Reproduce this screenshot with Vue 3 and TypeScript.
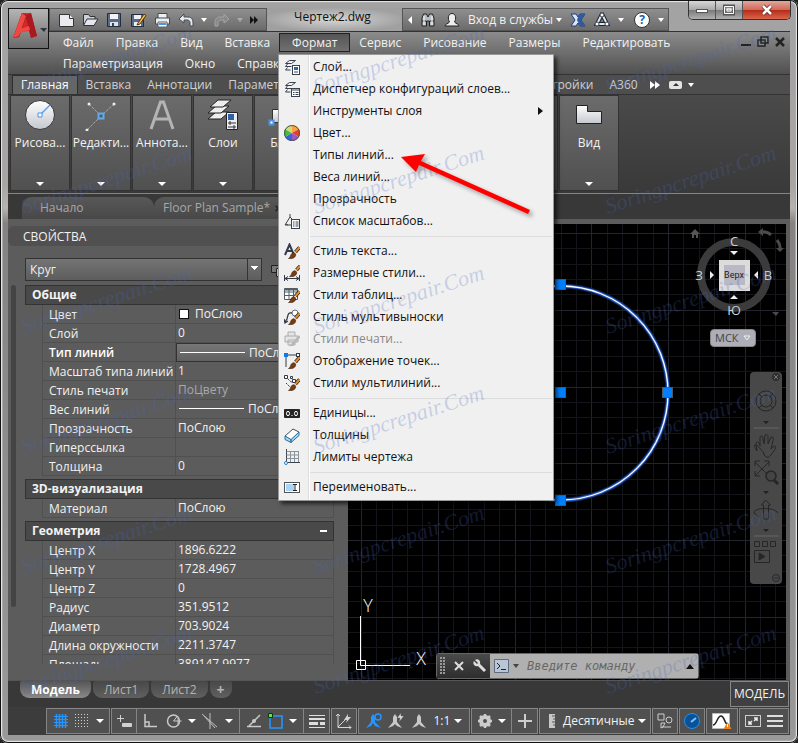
<script setup lang="ts">
import { ref } from 'vue'

interface MenuEntry {
  label: string
  icon?: string
  disabled?: boolean
  submenu?: boolean
}
interface PropertyRow {
  name: string
  value: string
  kind?: 'swatch' | 'line' | 'field' | 'muted'
}
interface PropertyGroup {
  title: string
  rows: PropertyRow[]
}

const brush =
  '<path d="M15.500 4.500l-4 4.500" stroke="#222" stroke-width="3.400"/><path d="M15.500 4.500l-4 4.500" stroke="#f08a1e" stroke-width="2"/><path d="M4.500 15.500c2.500-1 1.500-4 4-5.500 1.500-1 3.500.5 3.200 2.200C11.200 15 8 16 4.500 15.500z" fill="#7a3d12" stroke="#3c1c06" stroke-width=".6"/>'
const layers =
  '<path d="M5.500 1.500h6l-4 3h-6zM1.500 7.500h6M3.500 5l-2 2.500M1.500 11h5M3.500 8.500l-2 2.500" fill="none" stroke="#39424e"/>'

const glyphs: Record<string, string> = {
  layer: layers + '<rect x="8.500" y="6.500" width="7" height="9" fill="#fff" stroke="#39424e"/><rect x="10" y="8" width="4" height="3" fill="#2f62a8"/><path d="M10 13h4" stroke="#39424e"/>',
  states: layers + '<rect x="7.500" y="7.500" width="8" height="8" fill="#fff" stroke="#39424e"/><path d="M7.500 9h8M9 11.500h1.500M11.500 11.500h3M9 13.500h1.500M11.500 13.500h3" stroke="#39424e"/>',
  color:
    '<path d="M8 8V0a8 8 0 0 1 7 4z" fill="#f3a43a"/><path d="M8 8l7-4a8 8 0 0 1 0 8z" fill="#ee3b2c"/><path d="M8 8l7 4a8 8 0 0 1-7 4z" fill="#9a58c4"/><path d="M8 8v8a8 8 0 0 1-7-4z" fill="#3a62d8"/><path d="M8 8l-7 4a8 8 0 0 1 0-8z" fill="#49b83c"/><path d="M8 8L1 4a8 8 0 0 1 7-4z" fill="#d6d878"/><circle cx="8" cy="8" r="7.500" fill="none" stroke="#555"/>',
  scales: '<path d="M6 1v3L1 12h6M6 4l3 3M4 12l-2-1" fill="none" stroke="#39424e"/><rect x="7.500" y="6.500" width="8" height="9" fill="#fff" stroke="#39424e"/><path d="M9 9h1.500M11.500 9h3M9 11h1.500M11.500 11h3M9 13h1.500M11.500 13h3" stroke="#39424e"/>',
  text: '<path d="M1 12L5.500 1.500 10 12M2.500 8h6" fill="none" stroke="#333c48" stroke-width="2"/>' + brush,
  dim: '<path d="M.5 10v6M15.500 10v6M1 13.500h14M4 11.500l-3 2 3 2M12 11.500l3 2-3 2" fill="none" stroke="#333c48"/><g transform="translate(1 -4)">' + brush + '</g>',
  table: '<path d="M.5 1.500h13v11H.5zM.5 5h13M.5 8.500h13M5 3v9.500M9.500 3v9.500" fill="#fff" stroke="#555e68"/><path d="M.5 2.500h13" stroke="#555e68" stroke-width="2"/>' + brush,
  leader: '<circle cx="11" cy="4" r="3" fill="#fff" stroke="#666e78"/><path d="M8 4C4 3 4 6 3 10l-2 3M0 10l1 4 3-2" fill="none" stroke="#333c48" stroke-width="1.300"/>' + brush,
  print: '<g opacity=".55"><path d="M4 5V1h7v4M1 5h13v6H1zM4 9h7v5H4z" fill="#ddd" stroke="#777"/><path d="M15.500 5l-4 5" stroke="#888" stroke-width="2.500"/><path d="M5 15c3-1 3-5 6-5 1 3-2 6-6 5z" fill="#888"/></g>',
  point: '<path d="M2 2h12M2 2v12" stroke="#333c48"/><rect width="4" height="4" fill="#0a7cf0"/><rect x="12.500" y=".5" width="3" height="3" fill="#fff" stroke="#333c48"/>' + brush,
  mline: '<path d="M2 2l5 5 6-1M2 8l4 4" fill="none" stroke="#333c48" stroke-dasharray="2 1"/><g fill="#fff" stroke="#333c48"><path d="M.5.5h3v3h-3zM6.500 1.500h2v2h-2zM8.500 7.500h3v-3h-3z"/></g>' + brush,
  units: '<rect y="4" width="16" height="9" rx="1" fill="#252525"/><ellipse cx="4" cy="8.500" rx="1.500" ry="2.200" fill="none" stroke="#fff"/><ellipse cx="12" cy="8.500" rx="1.500" ry="2.200" fill="none" stroke="#fff"/><path d="M7.500 10.500h1" stroke="#fff"/>',
  thickness: '<path d="M1 9l8-7 6 3-8 8z" fill="#fff" stroke="#44505c"/><path d="M1 9v3.500l6 3V12.500zM7 12.500v3l8-7V5z" fill="#a6d8f4" stroke="#2f6f98"/>',
  limits: '<path d="M2.500 0v14M2 13.500h14" stroke="#39424e"/><path d="M2.500 2.500h12M2.500 6h12M2.500 9.500h12M6.500 2v11M10.500 2v11M14.500 2v11" stroke="#8a929a"/><circle cx="2" cy="14" r="1.500" fill="#fff" stroke="#1a82d8"/>',
  rename: '<rect x=".5" y="3.500" width="15" height="10" fill="#fff" stroke="#555"/><path d="M2 5h8v7H2z" fill="#a9d3f7"/><path d="M9 5.500h4M11 5.500v6M9 11.500h4" stroke="#222"/>',
  newDoc: '<path d="M1.500 2.500h10l4 4v8h-14z" fill="#e9ebf0" stroke="#333"/><path d="M11.500 2.500v4h4" fill="#fff" stroke="#333"/>',
  open: '<path d="M1.500 13V2.500h5l1.500 2h5V7" fill="#cdd0d8" stroke="#333"/><path d="M1.500 13.500L5 7h11l-4 6.500z" fill="#e4e7ee" stroke="#333"/>',
  save: '<path d="M1.500 1.500h13v13h-13z" fill="#5a6a84" stroke="#222d3d"/><path d="M4 2h8v5H4z" fill="#f0f2f5"/><path d="M4 10h8v4H4z" fill="#dde1e8"/><path d="M6 11h2v3H6z" fill="#35435b"/>',
  saveAs: '<path d="M1.500 2.500h12v12h-12z" fill="#5a6a84" stroke="#222d3d"/><path d="M4 3h7v4H4zM4 10h7v4H4z" fill="#eceff4"/><path d="M8 11l6-9 2 1.500-6 8.500-3 1z" fill="#f2c04a" stroke="#5a3208"/>',
  plot: '<path d="M4 6V1.500h9V6M1.500 6h14v6h-14z" fill="#eceef2" stroke="#444b55"/><path d="M4 10h9v5H4z" fill="#fff" stroke="#59626e"/><path d="M5 12h7" stroke="#4c97db" stroke-width="2"/>',
  undo: '<path d="M1 7l5-5v3h4c4 0 5 3 5 6v3h-3v-3c0-2-1-3-3-3H6v3z" fill="#e6e9ee" stroke="#444b55"/>',
  redo: '<path d="M15 7l-5-5v3H6c-4 0-5 3-5 6v3h3v-3c0-2 1-3 3-3h3v3z" fill="#888" stroke="#a4a4a4"/>',
  find: '<path d="M2 6l1.500-4h3L8 5l1.500-3h3L14 6v8H9.500V9h-3v5H2z" fill="#b8bdc4" stroke="#222"/><path d="M2 9h4M10 9h4" stroke="#222"/><path d="M4 4v9M12 4v9" stroke="#fff"/>',
  user: '<path d="M1 14c0-2 3-2 4.500-4-2-3-1.500-8.500 2.500-8.500S12.500 7 10.500 10c1.500 2 4.500 2 4.500 4z" fill="#eee" stroke="#222"/>',
  exchange: '<path d="M1 2h5l2 3 2-3h5l-4 6 4 6h-5l-2-3-2 3H1l4-6z" fill="#dbe6f6" stroke="#1d3d7a"/><path d="M9 2h6l-4 6 4 6h-5l-3-6z" fill="#2e5ba0"/>',
  share: '<path d="M8 2l5 10H3z" fill="none" stroke="#222" stroke-width="4"/><path d="M8 2l5 10H3z" fill="none" stroke="#dde6f2" stroke-width="2"/><g fill="#fff" stroke="#2b405e"><circle cx="8" cy="3" r="2"/><circle cx="3" cy="12" r="2"/><circle cx="13" cy="12" r="2"/></g>',
  grid: '<path d="M3.500 1v14M6.500 1v14M9.500 1v14M12.500 1v14" stroke="#2496ff" stroke-width="1.500"/><path d="M1 3.500h14M1 6.500h14M1 9.500h14M1 12.500h14" stroke="#2496ff"/>',
  snap: '<path d="M1 1.500h15M1 4.500h15M1 7.500h15M1 10.500h15M1 13.500h15" stroke="#d0d0d0" stroke-dasharray="1 2"/>',
  infer: '<path d="M1 5.500h7M4.500 2v7" stroke="#d0d0d0"/><rect x="6" y="10" width="10" height="4" rx="1" fill="#d0d0d0"/>',
  ortho: '<path d="M2 1v12.500h12M2 9h4v4" fill="none" stroke="#c8c8c8" stroke-width="1.500"/>',
  polar: '<circle cx="7.500" cy="8" r="6" fill="none" stroke="#c8c8c8" stroke-width="1.500"/><path d="M7.500 8h8M7.500 8l4-5M12 5v6" fill="none" stroke="#c8c8c8"/>',
  iso: '<path d="M0 1l15 13M8 0v16M2 3l11 12" fill="none" stroke="#c0c0c0"/>',
  track: '<path d="M1 13.500h14M3 13L14 2" stroke="#c8c8c8" stroke-width="1.500"/><circle cx="8" cy="8" r="2" fill="#c8c8c8"/>',
  osnap: '<path d="M2 3h12v12H2z" fill="none" stroke="#2496ff" stroke-width="1.600"/><path d="M.5.5h4v4h-4z" fill="#61e34d" stroke="#083808"/>',
  weight: '<path d="M0 2.500h16M0 14.500h16" stroke="#ddd"/><path d="M0 6h16" stroke="#ddd" stroke-width="2"/><path d="M0 10.500h9M11 10.500h5" stroke="#ddd" stroke-width="3"/>',
  ucs: '<path d="M2 1v13.500h13M2 14l8-8M0 3l2-2 2 2M13 12.500l2 2-2 2" fill="none" stroke="#d4d4d4"/><path d="M12 1L8 7h3l-1 3 5-6h-3z" fill="#d4d4d4"/>',
  annoOn: '<path d="M7 1l2 3v5l6 6-6-2-2-3-2 3-5 2 5-6V4z" fill="#2496ff"/><circle cx="12" cy="4" r="3" fill="#45515f" stroke="#2496ff" stroke-width="1.500"/>',
  annoFlash: '<path d="M7 1l2 3v5l5 6-5-2-2-2-2 2-5 2 5-6V4z" fill="#c8c8c8"/><path d="M13 0L9 5h3l-1 4 5-6h-3z" fill="#ddd" stroke="#555" stroke-width=".5"/>',
  anno: '<path d="M8 1l2 3v5l5 6-5-2-2-2-2 2-5 2 5-6V4z" fill="#c8c8c8"/>',
  gear: '<circle cx="8" cy="8" r="4" fill="none" stroke="#ccc" stroke-width="4"/><path d="M8 1v3M8 12v3M1 8h3M12 8h3M3 3l2 2M11 11l2 2M3 13l2-2M11 5l2-2" stroke="#ccc" stroke-width="2.500"/>',
  plus: '<path d="M8 1v14M1 8h14" stroke="#ccc" stroke-width="2"/>',
  ruler: '<path d="M5 1h6v14H5z" fill="#c8c8c8"/><path d="M11 3H8M11 6H9M11 9H8M11 12H9" stroke="#555"/>',
  shapes: '<path d="M1 1h6v6H1zM4 15v-5h4l-2 4z" fill="none" stroke="#ccc"/><circle cx="12" cy="7" r="3" fill="none" stroke="#ccc"/><path d="M5 14h9" stroke="#ccc"/>',
  hardware: '<circle cx="8" cy="8" r="7.500" fill="#0a5298" stroke="#248ff0"/><path d="M7 9l5-4" stroke="#7cc4ff" stroke-width="2"/>',
  graph: '<path d="M.5.5h17v15H.5z" fill="#fff" stroke="#bbb"/><path d="M1 12c4 0 4-9 8-9s3 9 8 9" fill="none" stroke="#222" stroke-width="1.500"/><path d="M15.500 9l4 7h-8z" fill="#e98320"/><path d="M15.500 11v3" stroke="#fff"/>',
  full: '<rect x=".5" y="2.500" width="15" height="11" fill="none" stroke="#ccc"/><path d="M4 11l3-3M4 8v3h3M12 5L9 8M9 5h3v3" fill="none" stroke="#eee" stroke-width="1.500"/>',
  burger: '<path d="M0 3h16M0 8h16M0 13h16" stroke="#ddd" stroke-width="2"/>',
}

const bigIcons: Record<string, string> = {
  draw: '<circle cx="16" cy="16" r="14.500" fill="url(#silver)" stroke="#333"/><path d="M16 16L26 6" stroke="#5aa0ec" stroke-width="1.500"/><path d="M14 14h4v4h-4z" fill="#fff" stroke="#4a94e8"/>',
  modify: '<path d="M4 5l12 12L29 5M16 17L2 31" stroke="#a8a8a8" stroke-dasharray="3 1" fill="none"/><g fill="#eee"><circle cx="4" cy="5" r="1.500"/><circle cx="29" cy="5" r="1.500"/><circle cx="2" cy="31" r="1.500"/></g><path d="M13.500 14.500h5v5h-5z" fill="#466" stroke="#65a8f2" stroke-width="2"/>',
  annotate: '<path d="M5 30L14.500 3h3L27 30M9 20h14" fill="none" stroke="#b4b4b4" stroke-width="3"/>',
  layers: '<g fill="#eee" stroke="#222"><path d="M9 13h13l-8 7H1z"/><path d="M9 7h13l-8 7H1z"/><path d="M11 1h13l-8 7H3z"/></g><path d="M19.500 13.500h11v17h-11z" fill="#eceef2" stroke="#222"/><path d="M21 15h6v6h-6z" fill="#2f62a8"/><path d="M21 24h8M21 28h8M23 22v4M27 26v4" stroke="#333"/>',
  block: '<path d="M4.500 10.500h22v13h-22z" fill="url(#silver)" stroke="#333"/><path d="M1.500 21.500h4v4h-4z" fill="#fff" stroke="#4a94e8" stroke-width="2"/>',
  view: '<path d="M3.500 6.500h11v6h14v12h-25z" fill="url(#silver)" stroke="#222"/>',
}

const quickTools = ['newDoc', 'open', 'save', 'saveAs', 'plot']
const mainMenu = ['Файл', 'Правка', 'Вид', 'Вставка', 'Формат', 'Сервис', 'Рисование', 'Размеры', 'Редактировать', 'Параметризация', 'Окно', 'Справка']
const openMenu = ref('Формат')
const ribbonTabs = ['Главная', 'Вставка', 'Аннотации', 'Параметризация', 'Вид', 'Управление', 'Вывод', 'Надстройки', 'A360']
const activeTab = ref('Главная')

const ribbonPanels = [
  { label: 'Рисова...', icon: 'draw' },
  { label: 'Редакти...', icon: 'modify' },
  { label: 'Аннота...', icon: 'annotate' },
  { label: 'Слои', icon: 'layers' },
  { label: 'Блок', icon: 'block' },
  { label: 'Свойства', icon: 'view' },
  { label: 'Группы', icon: 'view' },
  { label: 'Утилиты', icon: 'view' },
  { label: 'Буфер...', icon: 'view' },
  { label: 'Вид', icon: 'view' },
]

const formatMenu: MenuEntry[][] = [
  [
    { label: 'Слой...', icon: 'layer' },
    { label: 'Диспетчер конфигураций слоев...', icon: 'states' },
    { label: 'Инструменты слоя', submenu: true },
    { label: 'Цвет...', icon: 'color' },
    { label: 'Типы линий...' },
    { label: 'Веса линий...' },
    { label: 'Прозрачность' },
    { label: 'Список масштабов...', icon: 'scales' },
  ],
  [
    { label: 'Стиль текста...', icon: 'text' },
    { label: 'Размерные стили...', icon: 'dim' },
    { label: 'Стили таблиц...', icon: 'table' },
    { label: 'Стиль мультивыноски', icon: 'leader' },
    { label: 'Стили печати...', icon: 'print', disabled: true },
    { label: 'Отображение точек...', icon: 'point' },
    { label: 'Стили мультилиний...', icon: 'mline' },
  ],
  [
    { label: 'Единицы...', icon: 'units' },
    { label: 'Толщины', icon: 'thickness' },
    { label: 'Лимиты чертежа', icon: 'limits' },
  ],
  [{ label: 'Переименовать...', icon: 'rename' }],
]

const propertyGroups: PropertyGroup[] = [
  {
    title: 'Общие',
    rows: [
      { name: 'Цвет', value: 'ПоСлою', kind: 'swatch' },
      { name: 'Слой', value: '0' },
      { name: 'Тип линий', value: 'ПоСлою', kind: 'field' },
      { name: 'Масштаб типа линий', value: '1' },
      { name: 'Стиль печати', value: 'ПоЦвету', kind: 'muted' },
      { name: 'Вес линий', value: 'ПоСлою', kind: 'line' },
      { name: 'Прозрачность', value: 'ПоСлою' },
      { name: 'Гиперссылка', value: '' },
      { name: 'Толщина', value: '0' },
    ],
  },
  { title: '3D-визуализация', rows: [{ name: 'Материал', value: 'ПоСлою' }] },
  {
    title: 'Геометрия',
    rows: [
      { name: 'Центр X', value: '1896.6222' },
      { name: 'Центр Y', value: '1728.4967' },
      { name: 'Центр Z', value: '0' },
      { name: 'Радиус', value: '351.9512' },
      { name: 'Диаметр', value: '703.9024' },
      { name: 'Длина окружности', value: '2211.3747' },
      { name: 'Площадь', value: '389147.9977' },
    ],
  },
]

// Grid lines: every fifth one is a major line.
const gridStep = 15.35
const gridLines = Array.from({ length: 140 }, (_, i) => ({ offset: Math.round(i * gridStep), major: i % 5 === 0 }))
const grips = [[213, 61], [213, 169], [320, 169], [213, 277], [105, 169]]

const marks = Array.from({ length: 18 }, (_, i) => ({ x: 24 + (i % 3) * 292, y: 94 + Math.floor(i / 3) * 120 }))
</script>

<template>
  <div class="window">
    <div class="window-buttons">
      <button aria-label="Свернуть"><svg width="12" height="12"><rect x=".5" y="5.500" width="11" height="3" fill="#fff" stroke="#555" /></svg></button>
      <button aria-label="Развернуть"><svg width="12" height="12"><path d="M1 2h10v8H1z" fill="none" stroke="#555" stroke-width="3" /><path d="M1.500 2.500h9v7h-9zM4 5h4v2H4z" fill="none" stroke="#fff" /></svg></button>
      <button class="close" aria-label="Закрыть"><svg width="12" height="12"><path d="M2 2l8 8M10 2l-8 8" stroke="#622" stroke-width="4" /><path d="M2 2l8 8M10 2l-8 8" stroke="#fff" stroke-width="2.500" /></svg></button>
    </div>

    <header class="top">
      <button class="app-button" aria-label="Меню приложения">
        <svg width="38" height="38" viewBox="0 0 38 38">
          <path d="M4 28L13 3h9l6 23-6 2-2-7-8 1-2 5z" fill="#d8262a" />
          <path d="M13 3l5 2 4-2 6 23-6 2-5-20-7 19-6 1z" fill="#a81a1f" />
          <path d="M13 3l4 3-7 20-6 2zM11 19l9-3 1 4-10 3z" fill="#ec4a42" />
          <path d="M31 18h7l-3 4z" fill="#2e3540" />
        </svg>
      </button>
      <div class="title-row">
        <div class="quick-bar">
          <button v-for="tool in quickTools" :key="tool" :aria-label="tool"><svg width="17" height="16" v-html="glyphs[tool]"></svg></button>
          <button aria-label="Отменить"><svg width="16" height="16" v-html="glyphs.undo"></svg></button>
          <i class="caret"></i>
          <button aria-label="Повторить"><svg width="16" height="16" v-html="glyphs.redo"></svg></button>
          <i class="caret dim"></i>
          <button aria-label="Ещё"><svg width="8" height="8"><path d="M0 0l4 4-4 4zM4 0l4 4-4 4z" fill="#111" /></svg></button>
        </div>
        <h1>Чертеж2.dwg</h1>
        <div class="info-bar">
          <svg width="4" height="8"><path d="M4 0v8L0 4z" fill="#fff" /></svg>
          <svg width="16" height="16" v-html="glyphs.find"></svg>
          <svg width="16" height="16" v-html="glyphs.user"></svg>
          <button class="signin">Вход в службы<i class="caret"></i></button>
          <svg width="16" height="16" v-html="glyphs.exchange"></svg>
          <svg width="16" height="16" v-html="glyphs.share"></svg>
          <i class="caret"></i>
          <button class="help" aria-label="Справка">?</button>
          <i class="caret"></i>
        </div>
      </div>
      <div class="menu-row">
        <nav>
          <div v-for="item in mainMenu" :key="item" class="menu-slot">
            <button class="menu-button" :class="{ open: item === openMenu }" @click="openMenu = item">{{ item }}</button>
            <div v-if="item === 'Формат' && openMenu === 'Формат'" class="popup" role="menu">
              <div v-for="(section, s) in formatMenu" :key="s" class="section">
                <button v-for="entry in section" :key="entry.label" class="entry" role="menuitem" :disabled="entry.disabled">
                  <span class="entry-icon"><svg v-if="entry.icon" width="16" height="16" fill="none" v-html="glyphs[entry.icon]"></svg></span>
                  <span class="entry-label">{{ entry.label }}</span>
                  <svg v-if="entry.submenu" width="5" height="8"><path d="M0 0l5 4-5 4z" fill="#111" /></svg>
                </button>
              </div>
            </div>
          </div>
        </nav>
        <div class="mdi">
          <button aria-label="Свернуть чертёж"><svg width="12" height="12"><path d="M1 9h10" stroke="#222" stroke-width="2" /></svg></button>
          <button aria-label="Восстановить чертёж"><svg width="12" height="12"><path d="M4 1h7v6H4zM1 4h7v6H1z" fill="#888" stroke="#222" stroke-width="1.500" /></svg></button>
          <button aria-label="Закрыть чертёж"><svg width="12" height="12"><path d="M2 2l8 8M10 2l-8 8" stroke="#222" stroke-width="2.500" /></svg></button>
        </div>
      </div>
    </header>

    <div class="ribbon-tabs">
      <button v-for="tab in ribbonTabs" :key="tab" :class="{ active: tab === activeTab }" @click="activeTab = tab">{{ tab }}</button>
      <svg width="42" height="10"><path d="M4 1l5 4-5 4zM9 1l5 4-5 4z" fill="#fff" /><rect x="23" y="1" width="13" height="8" rx="2" fill="#e4e4e4" /><path d="M27 6l3-3 3 3z" fill="#333" /></svg>
      <i class="caret"></i>
    </div>

    <div class="ribbon">
      <button v-for="panel in ribbonPanels" :key="panel.label" class="panel">
        <svg width="32" height="32" v-html="bigIcons[panel.icon]"></svg>
        <span>{{ panel.label }}</span>
        <i class="caret big"></i>
      </button>
      <svg class="defs" width="0" height="0"><defs><linearGradient id="silver" x1="0" y1="0" x2="0" y2="1"><stop offset="0" stop-color="#fff" /><stop offset="1" stop-color="#c4c7ce" /></linearGradient></defs></svg>
    </div>

    <div class="file-tabs">
      <button class="start">Начало</button>
      <button class="doc">Floor Plan Sample*<b>✕</b></button>
    </div>

    <main>
      <aside>
        <h2>СВОЙСТВА</h2>
        <div class="picker">
          <select aria-label="Тип объекта"><option>Круг</option></select>
          <svg width="24" height="18"><path d="M1.500 4.500h10v7h-10z" fill="#777" stroke="#222" /><path d="M6.500 7.500h8v8h-8z" fill="#a9c4ee" stroke="#222" /></svg>
        </div>
        <div class="properties">
          <div class="scroll"><i></i></div>
          <div class="groups">
            <section v-for="group in propertyGroups" :key="group.title">
              <h3>{{ group.title }}<i></i></h3>
              <table>
                <tbody>
                  <tr v-for="row in group.rows" :key="row.name">
                    <th scope="row" :class="{ chosen: row.kind === 'field' }">{{ row.name }}</th>
                    <td :class="row.kind"><i v-if="row.kind && row.kind !== 'muted'"></i>{{ row.value }}</td>
                  </tr>
                </tbody>
              </table>
            </section>
          </div>
        </div>
      </aside>

      <div class="canvas">
        <svg class="drawing" width="100%" height="100%">
          <g transform="translate(13 9)" shape-rendering="crispEdges">
            <path v-for="line in gridLines" :key="'v' + line.offset" :d="`M${line.offset} -20V2000`" :stroke="line.major ? '#22242e' : '#14151b'" />
            <path v-for="line in gridLines" :key="'h' + line.offset" :d="`M-20 ${line.offset}H2000`" :stroke="line.major ? '#22242e' : '#14151b'" />
          </g>
          <circle cx="213" cy="169" r="107" fill="none" stroke="#0a235c" stroke-width="5" />
          <circle cx="213" cy="169" r="107" fill="none" stroke="#2a5cc0" stroke-width="3" />
          <circle cx="213" cy="169" r="107" fill="none" stroke="#fff" stroke-width="1.300" />
          <rect v-for="(grip, g) in grips" :key="g" :x="grip[0] - 5.5" :y="grip[1] - 5.5" width="10" height="10" fill="#0080ff" stroke="#4b5a6a" />
          <path d="M12.500 392v49.500H62M8.500 436.500h9v9h-9z" fill="none" stroke="#fff" />
          <text x="20" y="388" class="axis" text-anchor="middle">Y</text>
          <text x="73" y="441" class="axis" text-anchor="middle">X</text>
        </svg>

        <svg class="cube" width="96" height="128">
          <circle cx="42" cy="51" r="33" fill="none" stroke="#3b3b3b" stroke-width="8" />
          <path d="M27 36h31v31H27z" fill="#dcdcdc" /><path d="M32 41h21v20H32z" fill="#b8b9c4" />
          <g class="compass" text-anchor="middle"><text x="42" y="22">С</text><text x="7" y="56">З</text><text x="76" y="56">В</text><text x="42" y="91">Ю</text></g>
          <text x="42" y="54" text-anchor="middle" class="face">Верх</text>
          <path d="M38 27h8l-4 4zM38 75h8l-4-4zM18 47v8l4-4zM66 47v8l-4-4z" fill="#eee" />
          <path d="M-2 10l5-5 5 5H6v4H4v-3H2v3H0v-4z" fill="#555" />
          <path d="M69 8q6-1 10 3M85 16q4 5 3 10" fill="none" stroke="#4a4a4a" stroke-width="3" /><path d="M66 8l5-4v8zM84 24h8l-4 4zM80 88h7l-3 4z" fill="#4a4a4a" />
        </svg>
        <button class="wcs">МСК<svg width="8" height="6"><path d="M1 1h6L4 5z" fill="none" stroke="#eee" /></svg></button>

        <svg class="navbar" width="32" height="212" fill="none" stroke="#262626">
          <rect width="32" height="212" rx="4" fill="#484848" stroke="none" />
          <circle cx="26" cy="5" r="4" fill="#303030" stroke="none" /><path d="M24 3l4 4M28 3l-4 4" stroke="#777" />
          <circle cx="16" cy="29" r="10" /><circle cx="16" cy="29" r="6" /><path d="M9 22l3 3M23 22l-3 3M9 36l3-3M23 36l-3-3" />
          <path d="M4 56h25M4 164h25" stroke="#666" />
          <path d="M14 82c-3-3-6-8-9-8-2 1 1 4 2 6l-1-8c2-3 3 0 4 3l0-9c2-3 3 0 3 2l1 5 1-9c3-1 3 1 3 3l0 6 3-7c3-1 2 3 2 4l-2 8 3-3c4 0 0 5-3 9-2 3-4 3-7 0z" transform="translate(0 -1)" />
          <path d="M5 90l14 14M19 90L5 104M5 94v-5h5M14 89h5v5M5 99v5h5" /><circle cx="21" cy="104" r="5" fill="#444" stroke-width="1.500" /><path d="M24 108l4 4" stroke-width="3" />
          <path d="M15.500 128l-4 5h2v14h5v-14h2zM4 141c0-6 20-6 24 0M4 141l5 4" />
          <path d="M4.500 169.500h5v5h-5zM12.500 169.500h5v5h-5zM20.500 169.500h5v5h-5zM4.500 178.500h15v12h-15z" /><path d="M9 181v7l6-3.500z" fill="#262626" />
          <path d="M13 49h6l-3 3zM13 119h6l-3 3zM13 157h6l-3 3z" fill="#222" stroke="none" />
          <circle cx="26" cy="206" r="3.500" /><path d="M24 206h4" />
        </svg>

        <form class="command" @submit.prevent>
          <div class="command-tools">
            <svg width="5" height="18"><path d="M1 0v18M4 0v18" stroke="#999" stroke-width="2" stroke-dasharray="2 1" /></svg>
            <svg width="10" height="10"><path d="M1 1l8 8M9 1L1 9" stroke="#ddd" stroke-width="2" /></svg>
            <svg width="14" height="14"><path d="M5 5l7 7" stroke="#ddd" stroke-width="3" /><path d="M2 1l3 3-1 1-3-3c-2 3 1 6 4 5l2-2c1-3-2-6-5-4z" fill="#ddd" /></svg>
          </div>
          <div class="command-line">
            <svg width="15" height="14"><path d="M.5.5h14v13H.5z" fill="#b9c6d6" stroke="#5e6c7d" /><path d="M3 4l3 3-3 3M7 10.500h5" fill="none" stroke="#222" /></svg>
            <i class="caret dark"></i>
            <input type="text" aria-label="Командная строка" placeholder="Введите команду" />
            <svg width="8" height="5"><path d="M0 5h8L4 0z" fill="#111" /></svg>
          </div>
        </form>
      </div>
    </main>

    <div class="layout-tabs">
      <button class="sheet active">Модель</button>
      <button class="sheet">Лист1</button>
      <button class="sheet">Лист2</button>
      <button class="sheet add" aria-label="Новый лист">+</button>
      <button class="model">МОДЕЛЬ</button>
    </div>

    <footer>
      <div class="cell w64"><svg width="16" height="16" v-html="glyphs.grid"></svg><svg width="16" height="16" v-html="glyphs.snap"></svg><i class="caret big"></i></div>
      <div class="joined">
        <div class="cell w26"><svg width="16" height="16" v-html="glyphs.infer"></svg></div>
        <div class="cell w103"><svg width="16" height="16" v-html="glyphs.ortho"></svg><svg width="16" height="16" v-html="glyphs.polar"></svg><i class="caret big"></i><svg width="16" height="16" v-html="glyphs.iso"></svg><i class="caret big"></i></div>
        <div class="cell w64"><svg width="16" height="16" v-html="glyphs.track"></svg><svg width="16" height="16" v-html="glyphs.osnap"></svg><i class="caret big"></i></div>
        <div class="cell w26"><svg width="16" height="16" v-html="glyphs.weight"></svg></div>
      </div>
      <div class="cell w26"><svg width="16" height="16" v-html="glyphs.ucs"></svg></div>
      <div class="cell w112"><svg width="16" height="16" v-html="glyphs.annoOn"></svg><svg width="16" height="16" v-html="glyphs.annoFlash"></svg><svg width="16" height="16" v-html="glyphs.anno"></svg><button>1:1<i class="caret big"></i></button></div>
      <div class="joined">
        <div class="cell w41"><svg width="16" height="16" v-html="glyphs.gear"></svg><i class="caret big"></i></div>
        <div class="cell w26"><svg width="16" height="16" v-html="glyphs.plus"></svg></div>
      </div>
      <div class="cell w112"><svg width="16" height="16" v-html="glyphs.ruler"></svg><button>Десятичные<i class="caret big"></i></button></div>
      <div class="cell w26"><svg width="16" height="16" v-html="glyphs.shapes"></svg></div>
      <div class="cell w26"><svg width="16" height="16" v-html="glyphs.hardware"></svg></div>
      <div class="cell w32"><svg width="20" height="16" v-html="glyphs.graph"></svg></div>
      <div class="cell w50"><svg width="16" height="16" v-html="glyphs.full"></svg><svg width="16" height="16" v-html="glyphs.burger"></svg></div>
    </footer>

    <svg class="overlay" width="100%" height="100%">
      <text v-for="mark in marks" :key="mark.x + '-' + mark.y" :transform="`translate(${mark.x} ${mark.y}) rotate(-18)`" class="mark">Soringpcrepair.Com</text>
      <path d="M401 157l24-3-4 7 109 49-2 4-109-49-3 7z" fill="#f00" class="pointer" />
    </svg>
  </div>
</template>

<style>
body {
  margin: 0;
  background: #222;
}
</style>

<style scoped>
* {
  box-sizing: border-box;
}
.window {
  position: relative;
  display: flex;
  flex-direction: column;
  min-height: 100vh;
  padding: 8px;
  overflow: hidden;
  border-radius: 8px;
  background: linear-gradient(#a3a3a3, #a9a5a3 25%, #b8b3b1 28%, #858281 30%, #8d8d8d 60%, #999);
  box-shadow: inset 0 0 0 1px #111, inset 0 0 0 2px #e4e4e4, inset 0 0 0 3px #aaa;
  font: 12px/16px 'Open Sans', 'Noto Sans', sans-serif;
  color: #f2f2f2;
}
button {
  margin: 0;
  padding: 0;
  border: 0;
  background: none;
  color: inherit;
  font: inherit;
  white-space: nowrap;
}
svg {
  display: block;
  flex: none;
}
.caret {
  flex: none;
  border: 3px solid transparent;
  border-top: 4px solid #fff;
  border-bottom: 0;
}
.caret.dim {
  border-top-color: #aaa;
}
.caret.dark {
  border-top-color: #444;
}
.caret.big {
  border-width: 4px 4px 0;
}
.window-buttons {
  position: absolute;
  top: 1px;
  right: 7px;
  display: flex;
  height: 19px;
  border: 1px solid #333;
  border-top: 0;
  border-radius: 0 0 5px 5px;
  overflow: hidden;
}
.window-buttons button {
  display: grid;
  place-items: center;
  width: 27px;
  border-right: 1px solid #555;
  background: linear-gradient(#d8d8d8, #aaa 48%, #787878 50%, #b0b0b0);
}
.window-buttons .close {
  width: 47px;
  border: 0;
  background: linear-gradient(#e2a69a, #d26a58 48%, #b52a18 50%, #d9664c);
}
.top {
  display: grid;
  grid-template: 24px 42px / 41px 1fr;
}
.app-button {
  position: relative;
  z-index: 1;
  grid-area: 1 / 1 / 3 / 2;
  width: 41px;
  height: 41px;
  border: 1px solid #111;
  background: linear-gradient(#b5b5b5, #6a6a6a);
}
.title-row {
  display: flex;
  border-bottom: 1px solid #333;
}
.quick-bar,
.info-bar {
  display: flex;
  align-items: center;
  border: 1px solid #555;
  background: linear-gradient(#8f8f8f, #6b6b6b);
}
.quick-bar {
  gap: 7px;
  width: 218px;
  padding-left: 8px;
}
h1 {
  width: 135px;
  margin: 0;
  padding-right: 4px;
  background: radial-gradient(#d6d6d6, #a0a0a0 75%);
  color: #111;
  font: inherit;
  line-height: 18px;
  text-align: right;
  text-align: center;
}
.info-bar {
  gap: 8px;
  width: 267px;
  padding: 0 4px 0 5px;
}
.signin {
  display: flex;
  align-items: center;
  gap: 3px;
}
.help {
  flex: none;
  width: 16px;
  height: 16px;
  margin-left: auto;
  border: 1px solid #333;
  border-radius: 8px;
  background: #fff;
  color: #1d5ea8;
  font-weight: 700;
  line-height: 14px;
}
.menu-row {
  grid-area: 2 / 1 / 3 / 3;
  display: flex;
  align-items: flex-start;
  background: linear-gradient(#8b8b8b, #505050);
}
nav {
  flex: 1;
  display: flex;
  flex-wrap: wrap;
  align-content: flex-start;
  padding: 1px 0 0 44px;
}
.menu-slot {
  position: relative;
  height: 21px;
}
.menu-button {
  height: 19px;
  padding: 0 10px;
  border: 1px solid transparent;
  line-height: 16px;
}
.menu-button.open {
  margin: 0 -2px;
  padding: 0 12px;
  border-color: #222;
  background: linear-gradient(#555, #707070);
}
.mdi {
  display: flex;
  gap: 5px;
  padding: 4px 4px 0;
}
.popup {
  position: absolute;
  z-index: 5;
  top: 21px;
  left: -3px;
  width: 276px;
  padding: 1px 1px 2px;
  border: 1px solid #999;
  background: linear-gradient(90deg, transparent 29px, #dcdcdc 29px 30px, #fff 30px 31px, transparent 31px) #f0f0f0;
  box-shadow: 3px 3px 4px #0009;
  color: #111;
}
.section + .section {
  padding-top: 8px;
  background: linear-gradient(#dcdcdc, #dcdcdc) 30px 4px / 242px 1px no-repeat;
}
.entry {
  display: flex;
  align-items: center;
  width: 100%;
  height: 22px;
  padding-right: 9px;
  text-align: left;
}
.entry:disabled {
  color: #888;
}
.entry-icon {
  width: 33px;
  padding-left: 4px;
}
.entry-label {
  flex: 1;
}
.ribbon-tabs {
  display: flex;
  align-items: center;
  height: 21px;
  padding-left: 4px;
  border-top: 1px solid #333;
  border-bottom: 1px solid #333;
  background: #4e4e4e;
}
.ribbon-tabs button {
  height: 19px;
  padding: 0 8px;
  color: #d0d0d0;
}
.ribbon-tabs .active {
  border: 1px solid #2e2e2e;
  border-bottom: 0;
  background: #656565;
  color: #fff;
}
.ribbon {
  display: flex;
  gap: 1px;
  height: 99px;
  padding: 0 2px 2px;
  border-bottom: 1px solid #858585;
  background: linear-gradient(#4a4a4a, #393939);
}
.panel {
  display: flex;
  flex-direction: column;
  align-items: center;
  width: 60px;
  padding: 3px 0 4px;
  border: 1px solid #333;
  background: linear-gradient(#6b6b6b, #505050);
}
.panel span {
  flex: 1;
  padding-top: 4px;
}
.defs {
  position: absolute;
}
.file-tabs {
  display: flex;
  height: 25px;
  padding: 3px 0 0 14px;
  background: #383838;
  color: #a8a8a8;
}
.file-tabs button {
  height: 22px;
  border-radius: 10px 10px 0 0;
  background: linear-gradient(#585858, #484848);
  text-align: left;
}
.start {
  width: 132px;
  padding-left: 18px;
}
.doc {
  width: 140px;
  padding-left: 9px;
}
.doc b {
  margin-left: 4px;
  color: #222;
  font-size: 10px;
}
main {
  flex: 1;
  display: flex;
  min-height: 461px;
  padding-right: 4px;
  background: #5c5c5c;
}
aside {
  display: flex;
  flex-direction: column;
  width: 340px;
  padding-bottom: 16px;
}
h2 {
  height: 20px;
  margin: 7px 0 12px;
  padding: 0 15px;
  border-radius: 6px;
  background: #505050;
  font: inherit;
  line-height: 22px;
}
.picker {
  display: flex;
  align-items: center;
  gap: 8px;
  padding: 0 0 4px 17px;
}
.picker select {
  width: 237px;
  height: 23px;
  padding: 0 4px;
  appearance: none;
  border: 1px solid #333;
  border-radius: 0;
  background:
    linear-gradient(45deg, transparent 50%, #fff 50%) 225px 7px / 4px 4px no-repeat,
    linear-gradient(-45deg, transparent 50%, #fff 50%) 229px 7px / 4px 4px no-repeat,
    linear-gradient(90deg, transparent 221px, #333 221px 222px, transparent 222px),
    linear-gradient(#747474, #5d5d5d);
  color: #eee;
  font: inherit;
}
.properties {
  display: flex;
  flex: 1 1 0;
  min-height: 0;
  overflow: hidden;
}
.scroll {
  width: 17px;
  padding-left: 3px;
}
.scroll i {
  display: block;
  width: 5px;
  height: 85%;
  border-radius: 3px;
  background: #444;
}
.groups {
  width: 309px;
  min-height: 0;
}
section {
  padding-bottom: 3px;
}
h3 {
  display: flex;
  align-items: center;
  justify-content: space-between;
  height: 20px;
  margin: 0;
  padding: 0 6px;
  border: 1px solid #333;
  background: #494949;
  font-size: 12px;
  line-height: 18px;
}
h3 i {
  width: 7px;
  height: 2px;
  background: #fff;
}
table {
  width: 292px;
  margin-left: 17px;
  border-collapse: separate;
  border-spacing: 0;
  table-layout: fixed;
  border-left: 1px solid #505050;
}
th,
td {
  height: 19px;
  padding: 0 2px;
  border-right: 1px solid #505050;
  border-bottom: 1px solid #505050;
  font-weight: 400;
  line-height: 18px;
  text-align: left;
  white-space: nowrap;
  overflow: hidden;
}
th {
  width: 133px;
  padding: 2px 0 0 6px;
  line-height: 16px;
}
th.chosen {
  color: #fff;
  font-weight: 600;
}
td.muted {
  color: #aaa;
}
td.swatch i {
  display: inline-block;
  width: 10px;
  height: 10px;
  margin: 0 6px 0 1px;
  border: 1px solid #111;
  background: #fff;
  vertical-align: -1px;
}
td.line i,
td.field i {
  display: inline-block;
  width: 65px;
  height: 1px;
  margin: 0 4px 0 1px;
  background: #fff;
  vertical-align: 4px;
}
td.field {
  border: 1px solid #333;
  background: linear-gradient(#777, #606060);
  line-height: 16px;
}
.canvas {
  position: relative;
  flex: 1;
  margin-top: 5px;
  background: #000;
}
.drawing {
  position: absolute;
}
.axis {
  fill: #fff;
  font-size: 18px;
  font-weight: 300;
}
.cube {
  position: absolute;
  top: 0;
  right: -2px;
  overflow: visible;
}
.compass {
  fill: #d0d0d0;
  font-size: 13px;
}
.face {
  fill: #222;
  font-family: 'Roboto', sans-serif;
  font-size: 9px;
}
.wcs {
  position: absolute;
  top: 105px;
  right: 30px;
  display: flex;
  align-items: center;
  justify-content: space-between;
  width: 46px;
  height: 18px;
  padding: 0 4px;
  border: 1px solid #888;
  border-radius: 4px;
  background: #aeaeb8;
  color: #444;
  font-size: 11px;
}
.navbar {
  position: absolute;
  top: 148px;
  right: 4px;
}
.command {
  position: absolute;
  bottom: 1px;
  left: 88px;
  display: flex;
  width: 263px;
  height: 26px;
  border: 1px solid #666;
  border-radius: 3px;
}
.command-tools {
  display: flex;
  align-items: center;
  gap: 9px;
  padding: 0 3px;
  background: linear-gradient(#4a4a4a, #2e2e2e);
}
.command-line {
  flex: 1;
  display: flex;
  align-items: center;
  gap: 4px;
  min-width: 0;
  padding: 0 4px;
  background: #b0b0b0;
}
.command-line input {
  flex: 1;
  min-width: 0;
  padding: 0 4px;
  border: 0;
  background: none;
  font: italic 12px/16px 'DejaVu Sans Mono', monospace;
}
.command-line input::placeholder {
  color: #686868;
  opacity: 1;
}
.layout-tabs {
  display: flex;
  gap: 2px;
  height: 27px;
  padding-left: 12px;
  border-top: 1px solid #555;
  background: #383838;
}
.sheet {
  height: 17px;
  padding: 0 11px;
  border-radius: 2px 2px 9px 9px;
  background: linear-gradient(#484848, #606060);
  color: #b4b4b4;
  line-height: 15px;
}
.sheet.active {
  background: linear-gradient(#555, #8a8a8a);
  color: #fff;
  font-weight: 700;
}
.add {
  width: 22px;
  padding: 0;
  font-weight: 700;
  font-size: 14px;
}
.model {
  height: 26px;
  margin: 0 1px 0 auto;
  padding: 0 3px;
  border: 1px solid #888;
  background: #404040;
}
footer {
  display: flex;
  justify-content: flex-end;
  gap: 1px;
  height: 28px;
  padding: 1px 1px 1px 0;
  background: #3c3c3c;
}
.joined {
  display: flex;
}
.cell {
  display: flex;
  align-items: center;
  justify-content: space-evenly;
  border: 1px solid #858585;
  background: #505050;
}
.joined .cell + .cell {
  border-left: 0;
}
.cell button {
  display: flex;
  align-items: center;
  gap: 4px;
}
.w26 {
  width: 26px;
}
.w32 {
  width: 32px;
}
.w41 {
  width: 41px;
}
.w50 {
  width: 50px;
}
.w64 {
  width: 64px;
}
.w103 {
  width: 103px;
}
.w112 {
  width: 112px;
}
.overlay {
  position: absolute;
  z-index: 9;
  inset: 0;
  pointer-events: none;
}
.mark {
  fill: #4a66c0;
  fill-opacity: 0.26;
  font: italic 22px 'Liberation Serif', serif;
}
.pointer {
  filter: drop-shadow(3px 3px 2px #0005);
}
</style>
